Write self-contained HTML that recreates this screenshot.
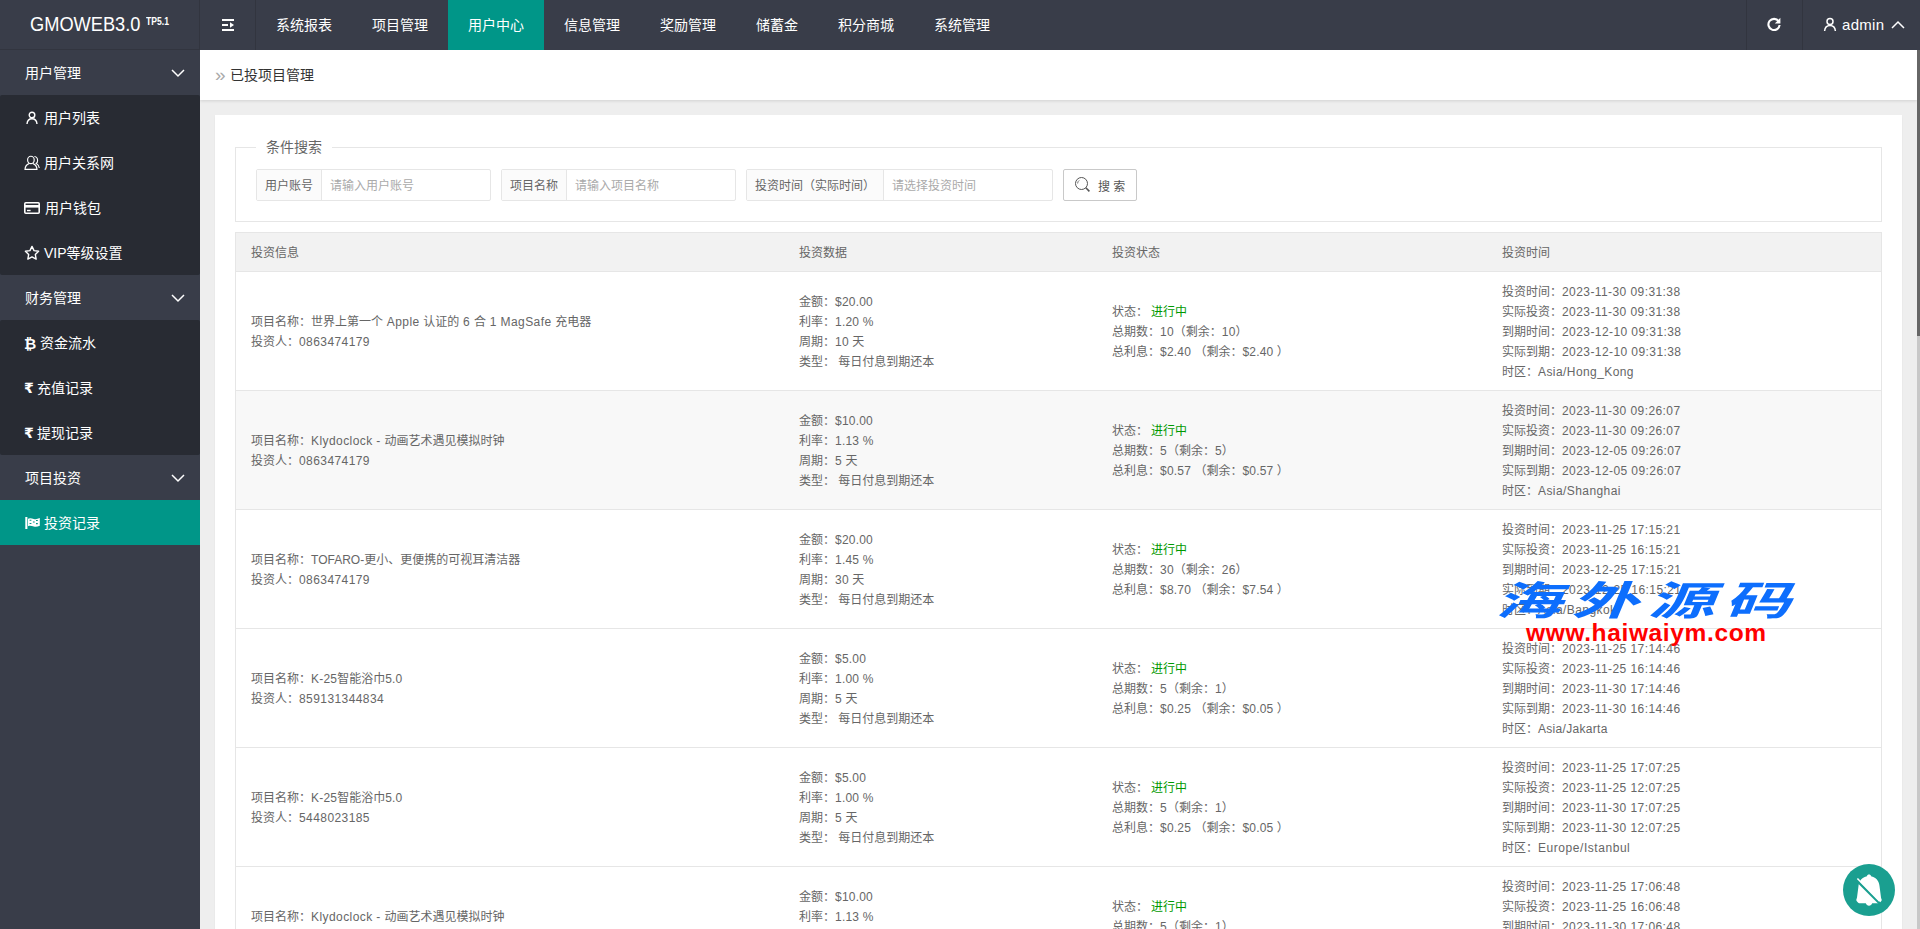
<!DOCTYPE html>
<html lang="zh-CN">
<head>
<meta charset="utf-8">
<title>已投项目管理</title>
<style>
*{box-sizing:border-box;margin:0;padding:0}
html,body{width:1920px;height:929px;overflow:hidden;background:#eee;font-family:"Liberation Sans","Noto Sans CJK SC",sans-serif;font-size:14px;color:#333}
a{text-decoration:none;color:inherit}
ul{list-style:none}
/* header */
.header{position:absolute;left:0;top:0;width:1920px;height:50px;background:#393D49;z-index:10}
.logo{position:absolute;left:0;top:0;width:200px;height:50px;color:#fff;font-size:19px;line-height:50px;border-right:1px solid #32353f;border-bottom:1px solid #32353f}
.logo .t{position:absolute;left:30px;top:-1px;font-size:20px;transform:scaleX(.912);transform-origin:0 50%}
.logo sup{position:absolute;left:146px;top:-3.500px;font-size:10px;font-weight:bold;transform:scaleX(.86);transform-origin:0 50%}
.toggle{position:absolute;left:200px;top:0;width:56px;height:50px;border-right:1px solid #32353f}
.toggle svg{position:absolute;left:21px;top:18px}
.nav{position:absolute;left:256px;top:0;height:50px;display:flex}
.nav li{height:50px;line-height:50px;padding:0 20px;color:#fff;font-size:14px}
.nav li.on{background:#009688}
.hright{position:absolute;right:0;top:0;height:50px}
.refresh{position:absolute;left:1746px;top:0;width:57px;height:50px;border-left:1px solid #32353f;border-right:1px solid #32353f}
.refresh svg{position:absolute;left:19px;top:17px}
.admin{position:absolute;left:1803px;top:0;width:117px;height:50px;color:#fff;line-height:50px;font-size:15px}
.admin svg.u{position:absolute;left:20px;top:17px}
.admin span{position:absolute;left:39px;top:0;letter-spacing:.3px}
.admin svg.c{position:absolute;left:88px;top:20px}
/* sidebar */
.side{position:absolute;left:0;top:50px;width:200px;height:879px;background:#393D49;z-index:9}
.side .g{height:45px;line-height:47px;color:#fff;font-size:14px;padding-left:25px;position:relative}
.side .g svg{position:absolute;left:171px;top:19px}
.side .sub{background:#282B33;border-radius:2px}
.side .sub li{height:45px;line-height:45px;color:#fff;font-size:14px;position:relative}
.side .sub li span{position:absolute;top:1px}
.side .sub li svg{position:absolute}
.side .sub li.on{background:#009688}
/* main */
.crumb{position:absolute;left:200px;top:50px;width:1717px;height:50px;background:#fff;box-shadow:0 1px 3px rgba(0,0,0,.12);line-height:50px;font-size:14px;color:#333;z-index:5}
.crumb .r{position:absolute;left:15px;top:0;color:#aaa;font-size:19px}
.crumb .x{position:absolute;left:30px;top:0}
.card{position:absolute;left:215px;top:115px;width:1687px;height:830px;background:#fff;box-shadow:0 1px 2px rgba(0,0,0,.05)}
.fs{position:absolute;left:20px;top:32px;width:1647px;height:75px;border:1px solid #e6e6e6}
.fs .lg{position:absolute;left:20px;top:-11px;background:#fff;padding:0 10px;font-size:14px;color:#666;line-height:20px}
.grp{position:absolute;top:21px;height:32px;border:1px solid #e6e6e6;border-radius:2px;display:flex;font-size:12px;line-height:30px}
.grp .lb{background:#FBFBFB;border-right:1px solid #e6e6e6;color:#666;padding:2px 8px 0;white-space:nowrap;line-height:28px}
.grp .in{color:#aaa;padding:3px 0 0 8px;white-space:nowrap;line-height:27px}
.btn{position:absolute;left:827px;top:21px;width:74px;height:32px;border:1px solid #C9C9C9;border-radius:2px;background:#fff;color:#555;font-size:12px;line-height:30px}
.btn svg{position:absolute;left:10px;top:6px}
.btn span{position:absolute;left:34px;top:2px}
/* table */
.tb{position:absolute;left:20px;top:117px;width:1647px;border:1px solid #e6e6e6;border-bottom:none;height:720px}
.th{height:39px;background:#f2f2f2;border-bottom:1px solid #e6e6e6;position:relative;font-size:12px;color:#666;line-height:38px}
.th span{position:absolute;top:1px}
.row{height:119px;border-bottom:1px solid #e6e6e6;position:relative;font-size:12px;color:#666;line-height:20px}
.row.hv{background:#f8f8f8}
.row div{position:absolute;white-space:nowrap}
.c1{left:15px;top:40px}
.c2{left:563px;top:20px}
.c3{left:876px;top:30px}
.c4{left:1266px;top:10px}
.gr{color:#090;margin-left:3px}
.row i{font-style:normal;letter-spacing:.42px}
.row b{font-weight:normal;letter-spacing:.2px}
/* scrollbar */
.sbt{position:absolute;left:1917px;top:50px;width:3px;height:879px;background:#c8c8c8;z-index:6}
.sbh{position:absolute;left:1917px;top:50px;width:3px;height:286px;background:#666;z-index:7}
/* watermark */
.wm1{position:absolute;left:1495px;top:573px;font-weight:700;font-style:italic;font-size:40px;line-height:56px;color:#0d6efd;letter-spacing:6px;white-space:nowrap;z-index:20;transform:scaleX(1.660);transform-origin:0 50%}
.wm2{position:absolute;left:1526px;top:618px;font-weight:bold;font-size:23px;line-height:30px;color:#f00;white-space:nowrap;z-index:20;letter-spacing:.6px;transform:scaleX(1.065);transform-origin:0 50%}
.fab{position:absolute;left:1843px;top:864px;width:52px;height:52px;border-radius:50%;background:#1a9f90;z-index:21}
.fab svg{position:absolute;left:0;top:0}
</style>
</head>
<body>
<div class="header">
  <div class="logo"><span class="t">GMOWEB3.0</span><sup>TP5.1</sup></div>
  <div class="toggle"><svg width="14" height="14" viewBox="0 0 14 14"><path d="M1 2h12M1 7h6M1 12h12" stroke="#fff" stroke-width="1.8" fill="none"/><path d="M9 4.2v5.6L13 7z" fill="#fff"/></svg></div>
  <ul class="nav">
    <li>系统报表</li><li>项目管理</li><li class="on">用户中心</li><li>信息管理</li><li>奖励管理</li><li>储蓄金</li><li>积分商城</li><li>系统管理</li>
  </ul>
  <div class="refresh"><svg width="16" height="16" viewBox="0 0 16 16"><path d="M12.6 4.2A5.6 5.6 0 1 0 13.6 8" stroke="#fff" stroke-width="2.100" fill="none"/><path d="M14.400 .8v5.600h-5.600z" fill="#fff"/></svg></div>
  <div class="admin"><svg class="u" width="14" height="15" viewBox="0 0 14 15"><circle cx="7" cy="4.6" r="3" stroke="#fff" stroke-width="1.5" fill="none"/><path d="M1.6 14c.3-3.6 2.4-5.6 5.4-5.6s5.100 2 5.400 5.600" stroke="#fff" stroke-width="1.500" fill="none"/></svg><span>admin</span><svg class="c" width="14" height="10" viewBox="0 0 14 10"><path d="M1 8l6-6 6 6" stroke="#fff" stroke-width="1.5" fill="none"/></svg></div>
</div>

<div class="side">
  <div class="g">用户管理<svg width="14" height="9" viewBox="0 0 14 9"><path d="M1 1l6 6 6-6" stroke="#fff" stroke-width="1.500" fill="none"/></svg></div>
  <ul class="sub">
    <li><svg style="left:26px;top:16px" width="12" height="14" viewBox="0 0 12 14"><circle cx="6" cy="4" r="2.800" stroke="#fff" stroke-width="1.400" fill="none"/><path d="M1 13c.3-3.400 2.200-5.200 5-5.200s4.700 1.800 5 5.200" stroke="#fff" stroke-width="1.400" fill="none"/></svg><span style="left:44px">用户列表</span></li>
    <li><svg style="left:24px;top:15px" width="16" height="16" viewBox="0 0 16 16"><ellipse cx="6.900" cy="4.900" rx="3.300" ry="3.700" stroke="#fff" stroke-width="1.150" fill="none"/><path d="M5 8.600C2.600 9.500 1.200 11.400 1 14.400h12c-.2-3-1.600-4.900-4-5.800" stroke="#fff" stroke-width="1.150" fill="none"/><path d="M10.400 1.500c2 .3 3.200 1.900 3.200 3.900 0 1.300-.5 2.400-1.400 3.100 1.800.8 2.800 2.300 3.100 4.500" stroke="#fff" stroke-width="1.100" fill="none"/></svg><span style="left:44px">用户关系网</span></li>
    <li><svg style="left:24px;top:17px" width="16" height="12" viewBox="0 0 16 12"><rect x=".8" y=".8" width="14.400" height="10.400" rx="1" stroke="#fff" stroke-width="1.600" fill="none"/><rect x="1" y="3" width="14" height="2.600" fill="#fff"/><rect x="3" y="7.800" width="3.600" height="1.400" fill="#fff"/></svg><span style="left:45px">用户钱包</span></li>
    <li><svg style="left:24px;top:15px" width="16" height="16" viewBox="0 0 15 15"><path d="M7.500 1.300l1.900 4 4.300.6-3.100 3 .8 4.300-3.900-2.100-3.900 2.100.8-4.300-3.100-3 4.300-.6z" stroke="#fff" stroke-width="1.300" fill="none" stroke-linejoin="round"/></svg><span style="left:44px">VIP等级设置</span></li>
  </ul>
  <div class="g">财务管理<svg width="14" height="9" viewBox="0 0 14 9"><path d="M1 1l6 6 6-6" stroke="#fff" stroke-width="1.500" fill="none"/></svg></div>
  <ul class="sub">
    <li><span style="left:24px;font-weight:bold;font-size:15px;font-family:'Liberation Sans','DejaVu Sans',sans-serif">₿</span><span style="left:40px">资金流水</span></li>
    <li><span style="left:24px;font-weight:bold;font-size:14px;font-family:'Liberation Sans','DejaVu Sans',sans-serif">₹</span><span style="left:37px">充值记录</span></li>
    <li><span style="left:24px;font-weight:bold;font-size:14px;font-family:'Liberation Sans','DejaVu Sans',sans-serif">₹</span><span style="left:37px">提现记录</span></li>
  </ul>
  <div class="g">项目投资<svg width="14" height="9" viewBox="0 0 14 9"><path d="M1 1l6 6 6-6" stroke="#fff" stroke-width="1.500" fill="none"/></svg></div>
  <ul class="sub">
    <li class="on"><svg style="left:25px;top:17px" width="16" height="13" viewBox="0 0 16 13"><rect x=".3" y="0" width="2.100" height="12" fill="#fff"/><path d="M3 1.700c2-1.200 3.800-.2 5.800.300s3.800.1 6-.900v7.600c-2.200 1-4 1.300-6 .8s-3.800-1.400-5.800-.3z" fill="#fff"/><path d="M4.600 2.700h1.800v1.100H4.600zM11 3h1.800v1.100H11zM7.900 4.400h1.800v1.100H7.900zM4.600 6h1.800v1.100H4.600zM11 6.100h1.800v1.100H11z" fill="#009688"/></svg><span style="left:44px">投资记录</span></li>
  </ul>
</div>

<div class="crumb"><span class="r">»</span><span class="x">已投项目管理</span></div>

<div class="card">
  <div class="fs">
    <div class="lg">条件搜索</div>
    <div class="grp" style="left:20px;width:235px"><div class="lb">用户账号</div><div class="in">请输入用户账号</div></div>
    <div class="grp" style="left:265px;width:235px"><div class="lb">项目名称</div><div class="in">请输入项目名称</div></div>
    <div class="grp" style="left:510px;width:307px"><div class="lb">投资时间（实际时间）</div><div class="in">请选择投资时间</div></div>
    <div class="btn"><svg width="18" height="18" viewBox="0 0 18 18"><circle cx="7.500" cy="7.500" r="6" stroke="#555" stroke-width="1" fill="none"/><path d="M11.800 11.800l3.600 3.600" stroke="#555" stroke-width="1.600" fill="none"/><path d="M3.600 7.500a3.900 3.900 0 0 1 1.600-3.100" stroke="#555" stroke-width=".8" fill="none"/></svg><span>搜 索</span></div>
  </div>
  <div class="tb" id="tb">
    <div class="th"><span style="left:15px">投资信息</span><span style="left:563px">投资数据</span><span style="left:876px">投资状态</span><span style="left:1266px">投资时间</span></div>
    <div class="row">
      <div class="c1">项目名称：世界上第一个<i> Apple </i>认证的<i> 6 </i>合<i> 1 MagSafe </i>充电器<br>投资人：<i>0863474179</i></div>
      <div class="c2">金额：<b>$20.00</b><br>利率：<b>1.20 %</b><br>周期：<b>10 </b>天<br>类型： 每日付息到期还本</div>
      <div class="c3">状态：<span class="gr">进行中</span><br>总期数：<b>10</b>（剩余：<b>10</b>）<br>总利息：<b>$2.40</b> （剩余：<b>$2.40</b> ）</div>
      <div class="c4">投资时间：<i>2023-11-30 09:31:38</i><br>实际投资：<i>2023-11-30 09:31:38</i><br>到期时间：<i>2023-12-10 09:31:38</i><br>实际到期：<i>2023-12-10 09:31:38</i><br>时区：<i>Asia/Hong_Kong</i></div>
    </div>
    <div class="row hv">
      <div class="c1">项目名称：<i>Klydoclock - </i>动画艺术遇见模拟时钟<br>投资人：<i>0863474179</i></div>
      <div class="c2">金额：<b>$10.00</b><br>利率：<b>1.13 %</b><br>周期：<b>5 </b>天<br>类型： 每日付息到期还本</div>
      <div class="c3">状态：<span class="gr">进行中</span><br>总期数：<b>5</b>（剩余：<b>5</b>）<br>总利息：<b>$0.57</b> （剩余：<b>$0.57</b> ）</div>
      <div class="c4">投资时间：<i>2023-11-30 09:26:07</i><br>实际投资：<i>2023-11-30 09:26:07</i><br>到期时间：<i>2023-12-05 09:26:07</i><br>实际到期：<i>2023-12-05 09:26:07</i><br>时区：<i>Asia/Shanghai</i></div>
    </div>
    <div class="row">
      <div class="c1">项目名称：<i style="letter-spacing:0">TOFARO-</i>更小、更便携的可视耳清洁器<br>投资人：<i>0863474179</i></div>
      <div class="c2">金额：<b>$20.00</b><br>利率：<b>1.45 %</b><br>周期：<b>30 </b>天<br>类型： 每日付息到期还本</div>
      <div class="c3">状态：<span class="gr">进行中</span><br>总期数：<b>30</b>（剩余：<b>26</b>）<br>总利息：<b>$8.70</b> （剩余：<b>$7.54</b> ）</div>
      <div class="c4">投资时间：<i>2023-11-25 17:15:21</i><br>实际投资：<i>2023-11-25 16:15:21</i><br>到期时间：<i>2023-12-25 17:15:21</i><br>实际到期：<i>2023-12-25 16:15:21</i><br>时区：<i>Asia/Bangkok</i></div>
    </div>
    <div class="row">
      <div class="c1">项目名称：<i style="letter-spacing:.2px">K-25</i>智能浴巾<i style="letter-spacing:.2px">5.0</i><br>投资人：<i>859131344834</i></div>
      <div class="c2">金额：<b>$5.00</b><br>利率：<b>1.00 %</b><br>周期：<b>5 </b>天<br>类型： 每日付息到期还本</div>
      <div class="c3">状态：<span class="gr">进行中</span><br>总期数：<b>5</b>（剩余：<b>1</b>）<br>总利息：<b>$0.25</b> （剩余：<b>$0.05</b> ）</div>
      <div class="c4">投资时间：<i>2023-11-25 17:14:46</i><br>实际投资：<i>2023-11-25 16:14:46</i><br>到期时间：<i>2023-11-30 17:14:46</i><br>实际到期：<i>2023-11-30 16:14:46</i><br>时区：<i style="letter-spacing:.3px">Asia/Jakarta</i></div>
    </div>
    <div class="row">
      <div class="c1">项目名称：<i style="letter-spacing:.2px">K-25</i>智能浴巾<i style="letter-spacing:.2px">5.0</i><br>投资人：<i>5448023185</i></div>
      <div class="c2">金额：<b>$5.00</b><br>利率：<b>1.00 %</b><br>周期：<b>5 </b>天<br>类型： 每日付息到期还本</div>
      <div class="c3">状态：<span class="gr">进行中</span><br>总期数：<b>5</b>（剩余：<b>1</b>）<br>总利息：<b>$0.25</b> （剩余：<b>$0.05</b> ）</div>
      <div class="c4">投资时间：<i>2023-11-25 17:07:25</i><br>实际投资：<i>2023-11-25 12:07:25</i><br>到期时间：<i>2023-11-30 17:07:25</i><br>实际到期：<i>2023-11-30 12:07:25</i><br>时区：<i style="letter-spacing:.55px">Europe/Istanbul</i></div>
    </div>
    <div class="row">
      <div class="c1">项目名称：<i>Klydoclock - </i>动画艺术遇见模拟时钟<br>投资人：<i>0863474179</i></div>
      <div class="c2">金额：<b>$10.00</b><br>利率：<b>1.13 %</b><br>周期：<b>5 </b>天<br>类型： 每日付息到期还本</div>
      <div class="c3">状态：<span class="gr">进行中</span><br>总期数：<b>5</b>（剩余：<b>1</b>）<br>总利息：<b>$0.57</b> （剩余：<b>$0.11</b> ）</div>
      <div class="c4">投资时间：<i>2023-11-25 17:06:48</i><br>实际投资：<i>2023-11-25 16:06:48</i><br>到期时间：<i>2023-11-30 17:06:48</i><br>实际到期：<i>2023-11-30 16:06:48</i><br>时区：<i>Asia/Shanghai</i></div>
    </div>
  </div>
</div>

<div class="sbt"></div><div class="sbh"></div>

<div class="wm1">海外源码</div>
<div class="wm2">www.haiwaiym.com</div>
<div class="fab"><svg width="52" height="52" viewBox="0 0 52 52"><path d="M26 10.600c1.100 0 1.900.7 2.100 1.700 3.200.6 5.400 2.200 6.800 4.600 1 1.700 1.400 3.400 1.600 5l1.500 11.500c.1.900.7 1.600.7 2.400 0 1-.6 1.500-1.200 2.100-.6.700-1.400 1.300-2.400 1.300H29.200c-.5 1.500-1.700 2.500-3.200 2.500s-2.700-1-3.200-2.500H16.900c-1 0-1.800-.6-2.400-1.300-.6-.6-1.200-1.100-1.200-2.100 0-.8.600-1.500.7-2.400l1.500-11.500c.2-1.600.6-3.300 1.600-5 1.400-2.400 3.600-4 6.800-4.600.2-1 1-1.700 2.100-1.700z" fill="#fff"/><path d="M13.500 16.200l23.500 23.500" stroke="#1a9f90" stroke-width="2.600"/><path d="M14.400 14.400l22.200 22.800" stroke="#fff" stroke-width="1.500"/></svg></div>
</body>
</html>
